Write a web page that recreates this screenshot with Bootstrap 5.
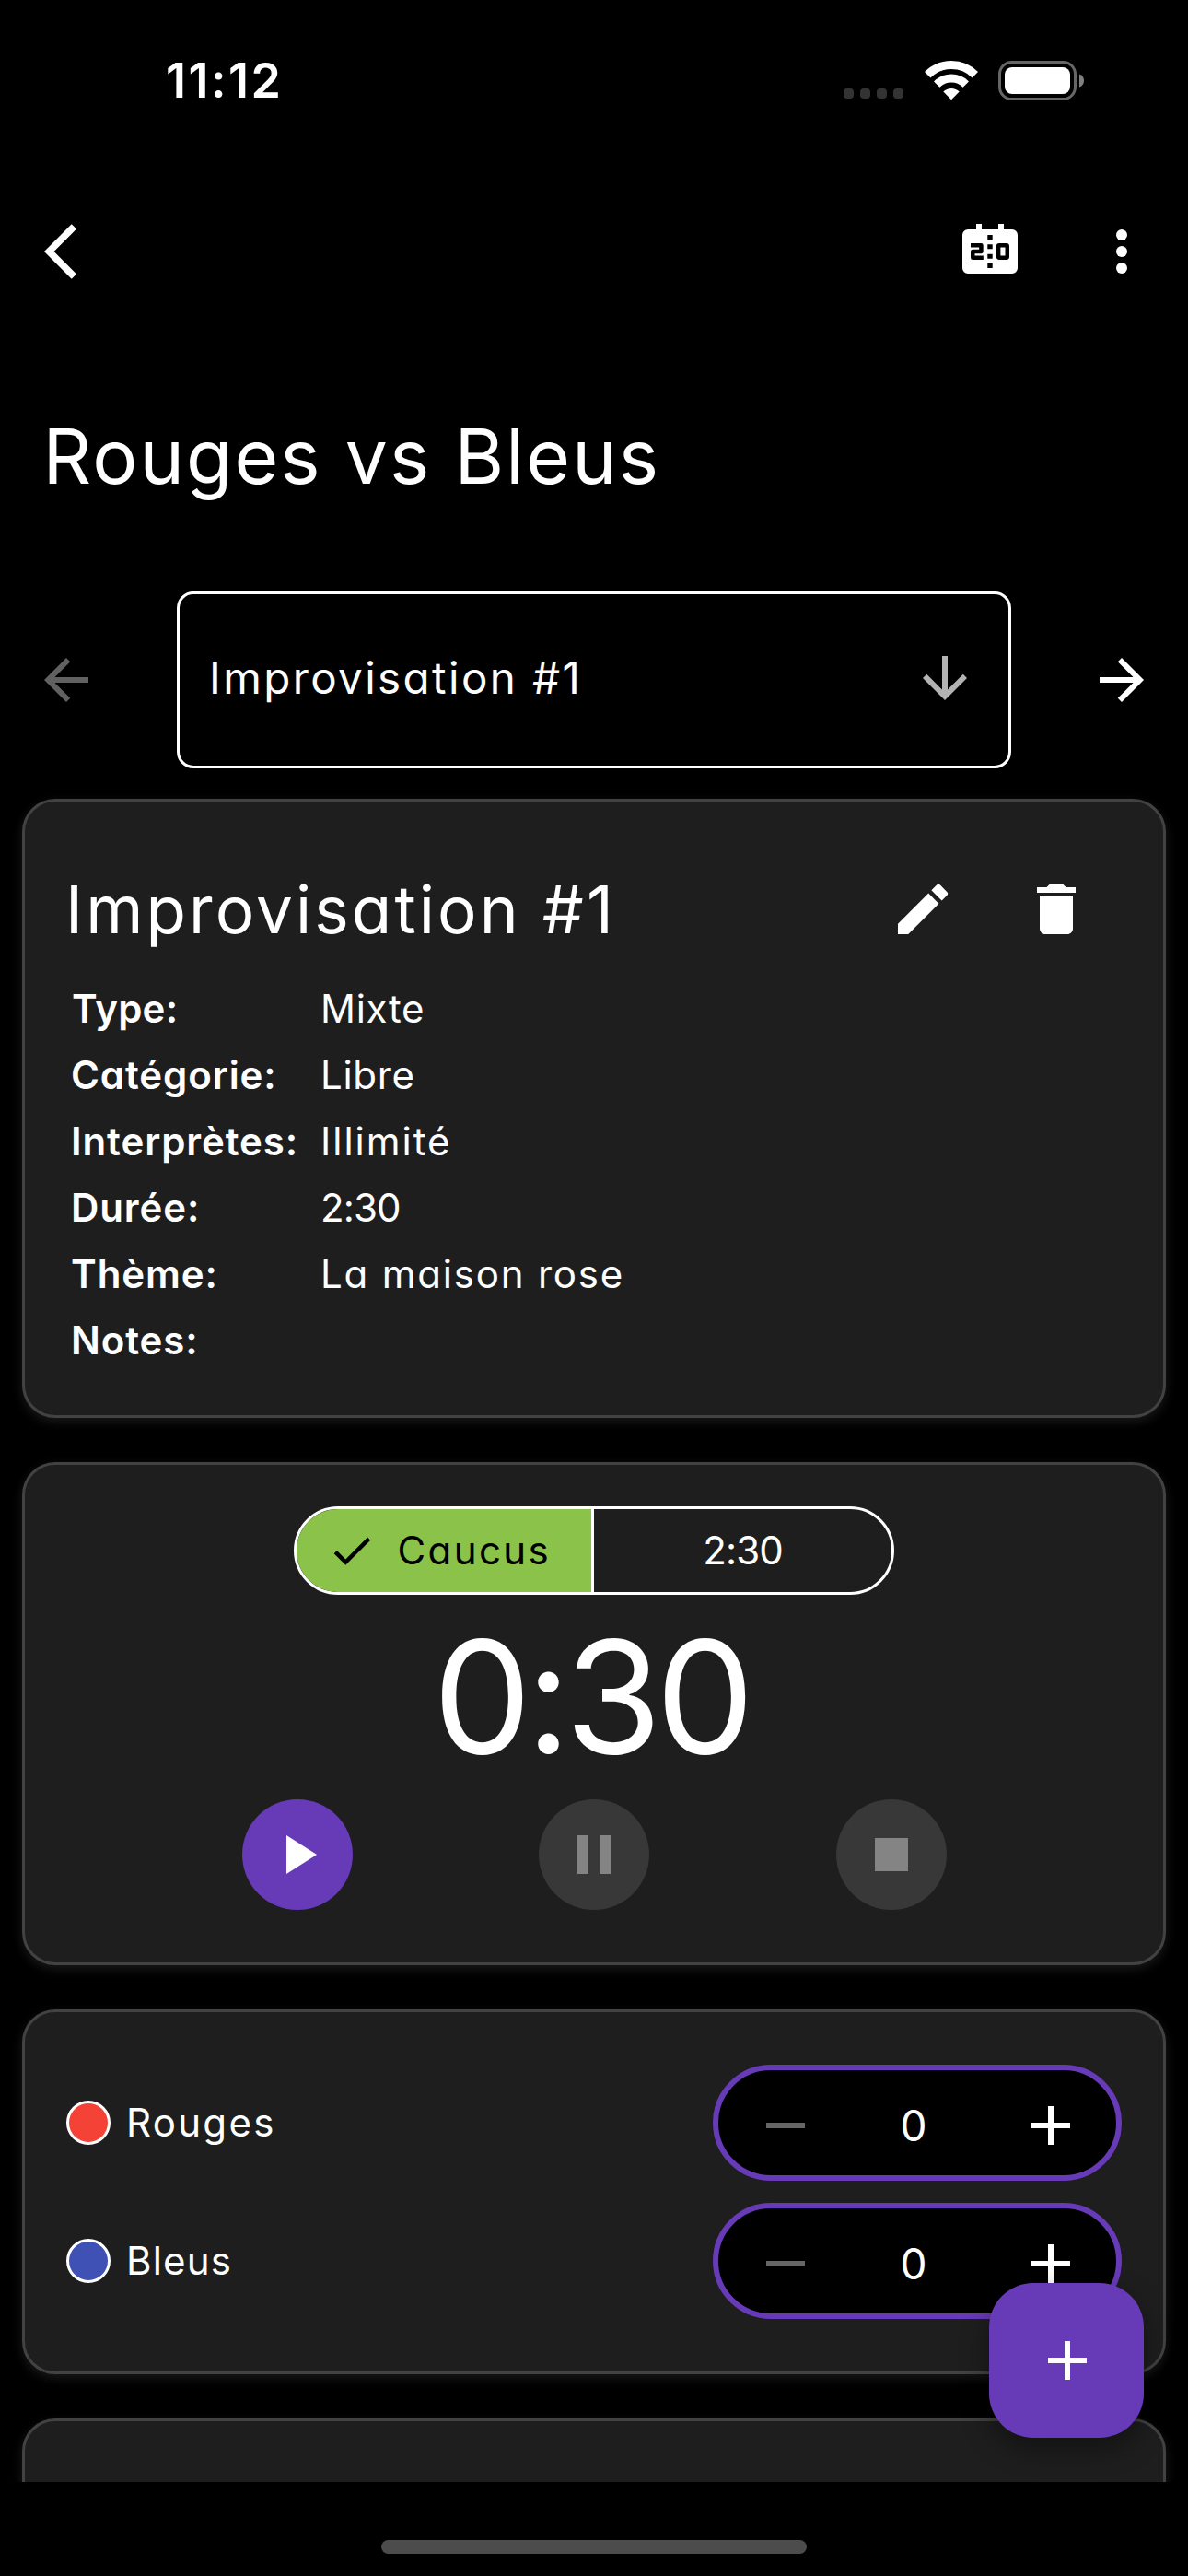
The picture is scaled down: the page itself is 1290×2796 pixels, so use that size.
<!DOCTYPE html>
<html lang="fr" data-bs-theme="dark">
<head>
<meta charset="utf-8">
<meta name="viewport" content="width=device-width, initial-scale=1">
<title>Rouges vs Bleus</title>
<link href="https://cdn.jsdelivr.net/npm/bootstrap@5.3.0/dist/css/bootstrap.min.css" rel="stylesheet">
<style>
:root{--violet:#673ab7;--surface:#1e1e1e;--outline:#424242}
body{font-family:Inter,"Liberation Sans",sans-serif;font-feature-settings:"cv11";background:#000;color:#fff;font-size:42px;line-height:72px}
.screen{width:1290px;height:2796px}
.screen>*{flex:none}
svg{display:block;flex:none;fill:currentColor}
.ic{width:72px;height:72px}
.status-bar{height:174px;padding:0 112px 0 180px}
.clock{font-size:52px;font-weight:600;letter-spacing:2.46px;padding-top:2px}
.sigs{gap:7px;margin:29px 23px 0 0}
.sig{width:11px;height:11px;border-radius:4px;background:#333}
.app-bar{height:198px;padding:0 36px 0 48px}
.app-bar .btns{gap:71px}
.page-title{font-size:82px;font-weight:400;line-height:108px;letter-spacing:2.1px;margin:70px 0 92px 46.5px}
.picker{padding:0 36px;gap:84px}
.picker-box{height:192px;border:3px solid #fff;border-radius:18px;padding:0 33px 5px 32px;font-size:47.5px;letter-spacing:2.4px}
.off{color:#616161}
.screen>.feed{flex:1 1 0;padding:33px 24px 0;gap:48px;min-height:0}
.panel{flex:none;background:var(--surface);border:3px solid var(--outline);border-radius:36px;box-shadow:0 4px 12px rgba(255,255,255,.1)}
.info{height:672px;padding:69px 45px 0}
.info h2{font-size:71px;font-weight:400;line-height:96px;letter-spacing:3.1px;margin:0 0 0 -1px}
.info .tools{gap:73px;padding-right:35px}
.facts{display:grid;grid-template-columns:271px 1fr;margin:24px 0 0 5px}
.facts dt{font-weight:600;letter-spacing:.9px;white-space:nowrap}
.facts dd{margin:0;letter-spacing:.7px}
.facts .wide{letter-spacing:1.8px}
.facts .tight{letter-spacing:.2px;margin-left:1px}
.facts .wider{letter-spacing:2px}
.facts .flat{letter-spacing:-.9px}
.timer{height:546px;padding-top:45px}
.phase{width:652px;height:96px;border:3px solid #fff;border-radius:48px}
.phase>div{width:50%}
.phase .on{background:#8bc34a;color:#000;border-right:3px solid #fff;padding-left:33px;gap:22.5px;letter-spacing:2.4px}
.phase .total{letter-spacing:-.9px}
.phase .on svg{width:54px;height:54px}
.countdown{font-size:170px;line-height:220px;letter-spacing:-6.4px;margin:0 0 2px -7px}
.round{width:120px;height:120px;border-radius:50%;background:#383838;color:#848484}
.round.go{background:var(--violet);color:#fff}
.controls{padding:0 33px}
.scores{height:396px;padding:57px 45px 0;gap:24px}
.team{height:126px}
.dot{width:48px;height:48px;border-radius:50%;border:3px solid #fff}
.team-name{margin-left:17px;letter-spacing:2.3px}
.team-name.b{letter-spacing:1.2px}
.stepper{width:444px;height:126px;border:6px solid var(--violet);border-radius:63px;background:#000;padding:6px 35px 0 37px;font-size:46px}
.stepper span{margin-right:10px}
.stepper .off{color:#666}
.home-zone{height:102px;padding-top:63px;background:#000}
.home-bar{width:462px;height:15px;border-radius:8px;background:#4c4c4c}
.fab{left:1074px;top:2478px;width:168px;height:168px;border-radius:48px;background:var(--violet);box-shadow:0 12px 30px rgba(0,0,0,.4);padding-left:2px}
</style>
</head>
<body>
<div class="screen d-flex flex-column position-relative overflow-hidden mx-auto">

  <header class="status-bar d-flex align-items-center justify-content-between">
    <span class="clock">11:12</span>
    <div class="d-flex align-items-center">
      <div class="sigs d-flex"><i class="sig"></i><i class="sig"></i><i class="sig"></i><i class="sig"></i></div>
      <svg width="58" height="43" viewBox="0 0 58 43" style="margin-right:22.5px">
        <g fill="none" stroke="#fff" stroke-width="9">
          <path d="M3.2 15.2a36.5 36.5 0 0 1 51.6 0"/>
          <path d="M13.2 25.6a22.5 22.5 0 0 1 31.6 0"/>
        </g>
        <path d="M29 42.2l-8.7-8.7a12.5 12.5 0 0 1 17.4 0z" fill="#fff"/>
      </svg>
      <svg width="94" height="43" viewBox="0 0 94 43">
        <rect x="1.5" y="1.5" width="82" height="40" rx="13" fill="none" stroke="#666" stroke-width="3"/>
        <rect x="7" y="7" width="71" height="29" rx="8" fill="#fff"/>
        <path d="M88 14.5q5 1.8 5 7t-5 7z" fill="#808080"/>
      </svg>
    </div>
  </header>

  <nav class="app-bar d-flex align-items-center justify-content-between">
    <svg class="ic" viewBox="0 0 24 24"><path d="M11.67 3.87L9.9 2.1 0 12l9.9 9.9 1.77-1.77L3.54 12z"/></svg>
    <div class="btns d-flex">
      <svg class="ic" viewBox="0 0 24 24">
        <path d="M7 2h2v2h6V2h2v2h3a2 2 0 0 1 2 2v12a2 2 0 0 1-2 2H4a2 2 0 0 1-2-2V6a2 2 0 0 1 2-2h3z"/>
        <g fill="#000"><path d="M11.1 6h1.8v1.7h-1.8zM11.1 9.4h1.8v1.7h-1.8zM11.1 12.9h1.8v1.7h-1.8zM11.1 16.3h1.8V18h-1.8z"/></g>
        <path d="M5 9.75h3.8v2.25H5.75v2.25H9.6" fill="none" stroke="#000" stroke-width="1.5" stroke-linejoin="round"/>
        <rect x="15.05" y="9.75" width="3.2" height="4.5" rx=".3" fill="none" stroke="#000" stroke-width="1.5"/>
      </svg>
      <svg class="ic" viewBox="0 0 24 24"><circle cx="12" cy="6" r="2"/><circle cx="12" cy="12" r="2"/><circle cx="12" cy="18" r="2"/></svg>
    </div>
  </nav>

  <h1 class="page-title">Rouges vs Bleus</h1>

  <div class="picker d-flex align-items-center">
    <svg class="ic off" viewBox="0 0 24 24"><path d="M20 11H7.83l5.59-5.59L12 4l-8 8 8 8 1.41-1.41L7.83 13H20z"/></svg>
    <div class="picker-box d-flex flex-fill align-items-center justify-content-between">
      <span>Improvisation #1</span>
      <svg class="ic" style="color:#b3b3b3" viewBox="0 0 24 24"><path d="M20 12l-1.41-1.41L13 16.17V4h-2v12.17l-5.58-5.59L4 12l8 8z"/></svg>
    </div>
    <svg class="ic" viewBox="0 0 24 24"><path d="M12 4l-1.41 1.41L16.17 11H4v2h12.17l-5.58 5.59L12 20l8-8z"/></svg>
  </div>

  <main class="feed d-flex flex-column overflow-hidden">
    <section class="panel info">
      <div class="d-flex align-items-center justify-content-between">
        <h2>Improvisation #1</h2>
        <div class="tools d-flex">
          <svg class="ic" viewBox="0 0 24 24"><path d="M3 17.25V21h3.75L17.81 9.94l-3.75-3.75zM20.71 7.04a1 1 0 0 0 0-1.41l-2.34-2.34a1 1 0 0 0-1.41 0l-1.83 1.83 3.75 3.75z"/></svg>
          <svg class="ic" viewBox="0 0 24 24"><path d="M6 19c0 1.1.9 2 2 2h8c1.1 0 2-.9 2-2V7H6zM19 4h-3.5l-1-1h-5l-1 1H5v2h14z"/></svg>
        </div>
      </div>
      <dl class="facts">
        <dt class="tight">Type:</dt><dd>Mixte</dd>
        <dt>Catégorie:</dt><dd>Libre</dd>
        <dt>Interprètes:</dt><dd class="wider">Illimité</dd>
        <dt>Durée:</dt><dd class="flat">2:30</dd>
        <dt>Thème:</dt><dd class="wide">La maison rose</dd>
        <dt>Notes:</dt><dd></dd>
      </dl>
    </section>

    <section class="panel timer d-flex flex-column align-items-center">
      <div class="phase d-flex overflow-hidden">
        <div class="on d-flex align-items-center">
          <svg viewBox="0 0 24 24"><path d="M9 16.17L4.83 12l-1.42 1.41L9 19 21 7l-1.41-1.41z"/></svg>
          <span>Caucus</span>
        </div>
        <div class="total d-flex align-items-center justify-content-center">2:30</div>
      </div>
      <div class="countdown">0:30</div>
      <div class="controls d-flex justify-content-evenly w-100">
        <div class="round go d-flex align-items-center justify-content-center"><svg class="ic" viewBox="0 0 24 24"><path d="M8 5v14l11-7z"/></svg></div>
        <div class="round d-flex align-items-center justify-content-center"><svg class="ic" viewBox="0 0 24 24"><path d="M6 19h4V5H6zm8-14v14h4V5z"/></svg></div>
        <div class="round d-flex align-items-center justify-content-center"><svg class="ic" viewBox="0 0 24 24"><path d="M6 6h12v12H6z"/></svg></div>
      </div>
    </section>

    <section class="panel scores d-flex flex-column">
      <div class="team d-flex align-items-center">
        <i class="dot" style="background:#f44336"></i>
        <span class="team-name flex-fill">Rouges</span>
        <div class="stepper d-flex align-items-center justify-content-between">
          <svg class="ic off" viewBox="0 0 24 24"><path d="M5 11h14v2H5z"/></svg>
          <span>0</span>
          <svg class="ic" viewBox="0 0 24 24"><path d="M19 13h-6v6h-2v-6H5v-2h6V5h2v6h6z"/></svg>
        </div>
      </div>
      <div class="team d-flex align-items-center">
        <i class="dot" style="background:#3f51b5"></i>
        <span class="team-name b flex-fill">Bleus</span>
        <div class="stepper d-flex align-items-center justify-content-between">
          <svg class="ic off" viewBox="0 0 24 24"><path d="M5 11h14v2H5z"/></svg>
          <span>0</span>
          <svg class="ic" viewBox="0 0 24 24"><path d="M19 13h-6v6h-2v-6H5v-2h6V5h2v6h6z"/></svg>
        </div>
      </div>
    </section>

    <section class="panel" style="height:300px"></section>
  </main>

  <footer class="home-zone d-flex justify-content-center"><div class="home-bar align-self-start"></div></footer>

  <div class="fab position-absolute d-flex align-items-center justify-content-center">
    <svg class="ic" viewBox="0 0 24 24"><path d="M19 13h-6v6h-2v-6H5v-2h6V5h2v6h6z"/></svg>
  </div>
</div>
<script src="https://cdn.jsdelivr.net/npm/bootstrap@5.3.0/dist/js/bootstrap.bundle.min.js"></script>
</body>
</html>
